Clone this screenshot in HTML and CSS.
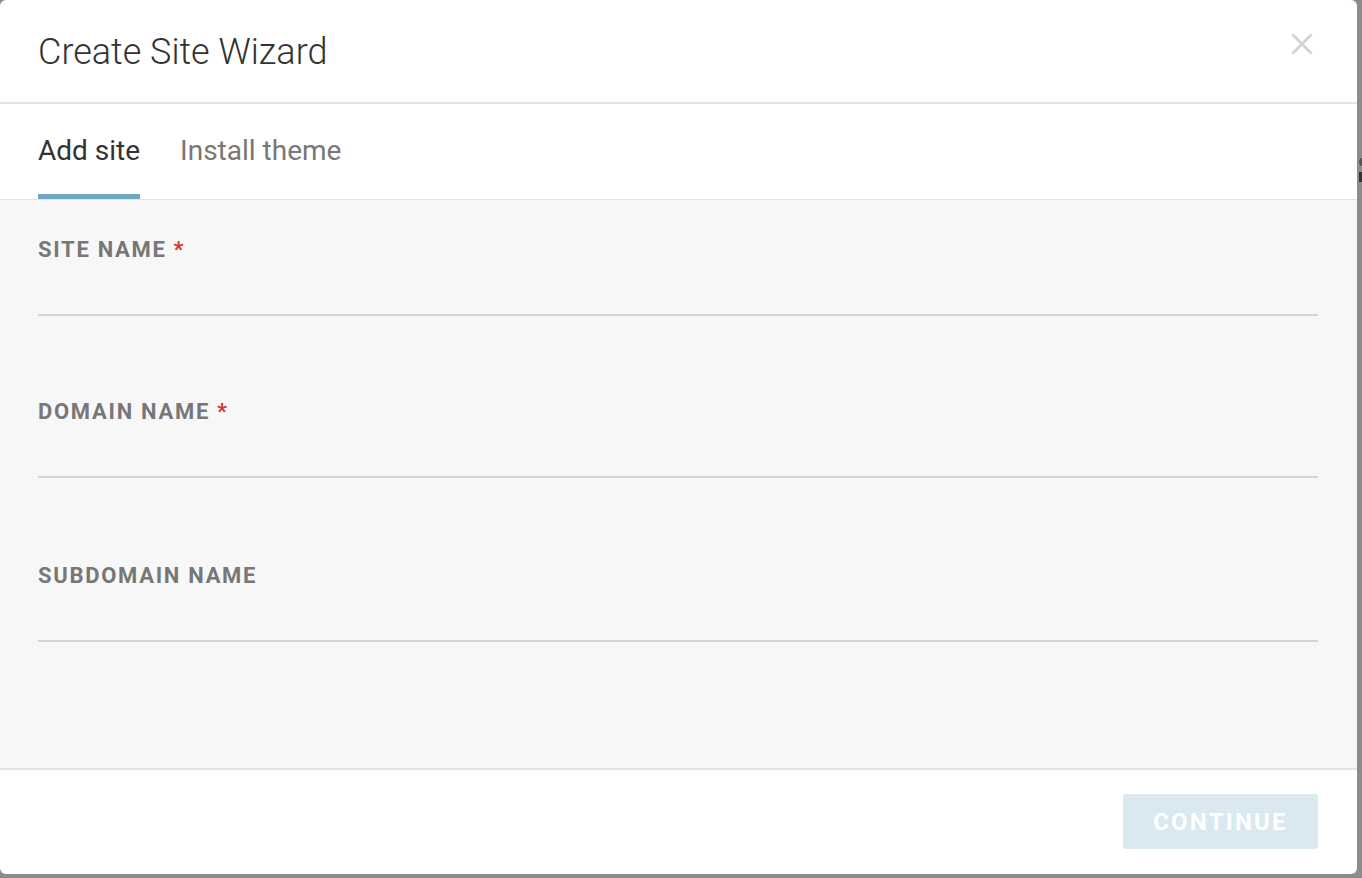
FILE: index.html
```html
<!DOCTYPE html>
<html>
<head>
<meta charset="utf-8">
<link rel="stylesheet" href="styles.css">
</head>
<body>
<div class="backdrop">
  <div class="modal">
    <header class="modal-header">
      <h1 class="modal-title">Create Site Wizard</h1>
      <button class="close" aria-label="Close">
        <svg width="22" height="22" viewBox="0 0 22 22"><path d="M1.5 1.5 L20.5 20.5 M20.5 1.5 L1.5 20.5" stroke="#d2d2d2" stroke-width="2.8" fill="none"/></svg>
      </button>
    </header>
    <nav class="tabs">
      <div class="tab active">Add site</div>
      <div class="tab">Install theme</div>
    </nav>
    <section class="modal-body">
      <div class="field">
        <label class="label">SITE NAME<span class="req">*</span></label>
        <div class="input"></div>
      </div>
      <div class="field field-wide">
        <label class="label">DOMAIN NAME<span class="req">*</span></label>
        <div class="input"></div>
      </div>
      <div class="field">
        <label class="label">SUBDOMAIN NAME</label>
        <div class="input"></div>
      </div>
    </section>
    <footer class="modal-footer">
      <button class="btn-continue">CONTINUE</button>
    </footer>
  </div>
  <div class="under">
    <span class="dot"></span>
    <span class="bar"></span>
  </div>
</div>
</body>
</html>
```

FILE: styles.css
```css
* { box-sizing: border-box; }
html, body { margin: 0; padding: 0; }
body {
  background: #8c8c8c;
  font-family: Roboto, "Liberation Sans", sans-serif;
  width: 1362px;
  height: 878px;
  overflow: hidden;
}
.backdrop {
  position: relative;
  width: 1362px;
  height: 878px;
}
.modal {
  width: 1357px;
  height: 874px;
  background: #fff;
  border-radius: 6px;
  display: flex;
  flex-direction: column;
  overflow: hidden;
}
.modal-header {
  height: 104px;
  border-bottom: 2px solid #e4e4e4;
  display: flex;
  align-items: flex-start;
  justify-content: space-between;
  padding: 31px 44px 0 38px;
}
.modal-title {
  margin: 0;
  font-size: 36px;
  line-height: 42px;
  font-weight: 300;
  color: #333;
}
.close {
  border: 0;
  background: none;
  padding: 0;
  margin-top: 2px;
  width: 22px;
  height: 22px;
  cursor: pointer;
}
.close svg { display: block; }
.tabs {
  display: flex;
  gap: 40px;
  padding-left: 38px;
  border-bottom: 1px solid #e2e2e2;
}
.tab {
  font-size: 28px;
  line-height: 33px;
  padding-top: 30px;
  padding-bottom: 27px;
  border-bottom: 5px solid transparent;
  color: #777;
}
.tab.active {
  color: #333;
  border-bottom-color: #6fa8c5;
}
.modal-body {
  flex: 1;
  background: #f7f7f7;
  border-bottom: 2px solid #e4e4e4;
  padding: 37px 39px 0 38px;
}
.field { margin-bottom: 83px; }
.field-wide { margin-bottom: 85px; }
.label {
  display: block;
  font-size: 22px;
  line-height: 26px;
  font-weight: 700;
  letter-spacing: 1.7px;
  color: #777;
}
.req {
  color: #d33a2f;
  margin-left: 7px;
}
.input {
  height: 53px;
  border-bottom: 2px solid #d4d4d4;
}
.modal-footer {
  height: 104px;
  display: flex;
  justify-content: flex-end;
  align-items: flex-start;
  padding: 24px 39px 0 0;
}
.btn-continue {
  width: 195px;
  height: 55px;
  border: 0;
  border-radius: 3px;
  background: #dae8f0;
  color: #fff;
  font-family: Roboto, "Liberation Sans", sans-serif;
  font-weight: 700;
  font-size: 24px;
  letter-spacing: 2.2px;
  padding: 0;
}
.under {
  position: absolute;
  left: 1357px;
  top: 150px;
  width: 5px;
  height: 40px;
}
.dot {
  position: absolute;
  left: 2px;
  top: 8px;
  width: 8px;
  height: 8px;
  border-radius: 50%;
  background: #555;
}
.bar {
  position: absolute;
  left: 2px;
  top: 22px;
  width: 6px;
  height: 10px;
  background: #333;
}
```
